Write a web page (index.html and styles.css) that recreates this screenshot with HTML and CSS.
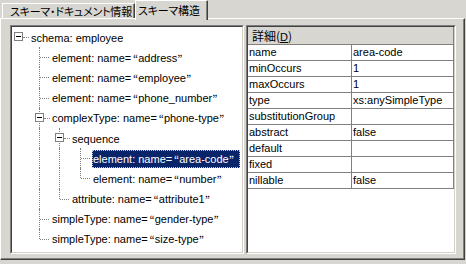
FILE: index.html
```html
<!DOCTYPE html>
<html lang="ja">
<head>
<meta charset="utf-8">
<title>スキーマ構造</title>
<link rel="stylesheet" href="styles.css">
</head>
<body>
<div class="dialog">
  <div class="tabs">
    <div class="tab tab-info">スキーマ・ドキュメント情報</div>
    <div class="tab tab-struct active">スキーマ構造</div>
  </div>
  <div class="page">
    <div class="pane tree">
      <div class="pane-in tree-in">
        <div class="node"><span class="c root"><i class="box"></i></span><span class="lbl">schema: employee</span></div>
        <div class="node"><span class="g"></span><span class="c tee"></span><span class="lbl">element: name=<span class="q qo">“</span>address<span class="q qc">”</span></span></div>
        <div class="node"><span class="g"></span><span class="c tee"></span><span class="lbl">element: name=<span class="q qo">“</span>employee<span class="q qc">”</span></span></div>
        <div class="node"><span class="g"></span><span class="c tee"></span><span class="lbl">element: name=<span class="q qo">“</span>phone_number<span class="q qc">”</span></span></div>
        <div class="node"><span class="g"></span><span class="c tee boxed"><i class="box"></i></span><span class="lbl">complexType: name=<span class="q qo">“</span>phone-type<span class="q qc">”</span></span></div>
        <div class="node"><span class="g"></span><span class="g pipe"></span><span class="c tee boxed"><i class="box"></i></span><span class="lbl">sequence</span></div>
        <div class="node"><span class="g"></span><span class="g pipe"></span><span class="g pipe"></span><span class="c tee"></span><span class="lbl sel">element: name=<span class="q qo">“</span>area-code<span class="q qc">”</span></span></div>
        <div class="node"><span class="g"></span><span class="g pipe"></span><span class="g pipe"></span><span class="c ell"></span><span class="lbl">element: name=<span class="q qo">“</span>number<span class="q qc">”</span></span></div>
        <div class="node"><span class="g"></span><span class="g pipe"></span><span class="c ell"></span><span class="lbl">attribute: name=<span class="q qo">“</span>attribute1<span class="q qc">”</span></span></div>
        <div class="node"><span class="g"></span><span class="c tee"></span><span class="lbl">simpleType: name=<span class="q qo">“</span>gender-type<span class="q qc">”</span></span></div>
        <div class="node"><span class="g"></span><span class="c ell"></span><span class="lbl">simpleType: name=<span class="q qo">“</span>size-type<span class="q qc">”</span></span></div>
      </div>
    </div>
    <div class="pane details">
      <div class="pane-in details-in">
        <div class="hdr">詳細(<u>D</u>)</div>
        <div class="grid">
          <div class="k">name</div><div class="v">area-code</div>
          <div class="k">minOccurs</div><div class="v">1</div>
          <div class="k">maxOccurs</div><div class="v">1</div>
          <div class="k">type</div><div class="v">xs:anySimpleType</div>
          <div class="k">substitutionGroup</div><div class="v"></div>
          <div class="k">abstract</div><div class="v">false</div>
          <div class="k">default</div><div class="v"></div>
          <div class="k">fixed</div><div class="v"></div>
          <div class="k">nillable</div><div class="v">false</div>
        </div>
      </div>
    </div>
  </div>
</div>
</body>
</html>
```

FILE: styles.css
```css
html, body {
  margin: 0;
  padding: 0;
}
body {
  width: 466px;
  height: 264px;
  overflow: hidden;
  background: #d8d6d0;
  color: #000;
  font-family: "Liberation Sans", "Noto Sans CJK JP", sans-serif;
  font-size: 11px;
}

/* ---------- tabs ---------- */
.tabs {
  display: flex;
  align-items: flex-end;
  height: 18px;
  padding-left: 2px;
}
.tab {
  box-sizing: border-box;
  height: 15px;
  border-top: 1px solid #fff;
  border-left: 1px solid #fff;
  border-right: 1px solid #404040;
  box-shadow: inset -1px 0 #808080;
  font-family: "Noto Sans CJK JP", sans-serif;
  font-feature-settings: "palt";
  font-size: 11px;
  letter-spacing: -0.2px;
  line-height: 14px;
  white-space: nowrap;
  overflow: hidden;
  background: #d8d6d0;
}
.tab-info {
  width: 133px;
  padding-left: 7px;
}
.tab-struct {
  width: 73px;
  padding-left: 2px;
}
.tab.active {
  height: 20px;
  line-height: 18px;
  margin-bottom: -2px;
  position: relative;
  z-index: 1;
}

/* ---------- page ---------- */
.page {
  box-sizing: border-box;
  width: 465px;
  height: 242px;
  border: 1px solid;
  border-color: #fff #404040 #404040 #fff;
  box-shadow: inset -1px -1px #808080;
  padding: 6px 8px 5px 9px;
  display: flex;
  gap: 2px;
}
.pane {
  box-sizing: border-box;
  height: 229px;
  border: 1px solid;
  border-color: #808080 #fff #fff #808080;
  background: #fff;
}
.pane-in {
  box-sizing: border-box;
  height: 100%;
  border: 1px solid;
  border-color: #404040 #d4d0c8 #d4d0c8 #404040;
}
.tree { width: 234px; }
.details { width: 210px; }

/* ---------- tree ---------- */
.node {
  display: flex;
  height: 20.2px;
  align-items: stretch;
  white-space: nowrap;
}
.g, .c {
  position: relative;
  flex: none;
}
.g { width: 21px; }
.g:nth-child(2) { width: 20px; }
.c { width: 18px; }

.pipe::before,
.tee::before,
.ell::before {
  content: "";
  position: absolute;
  left: 6px;
  top: 0;
  bottom: 0;
  border-left: 1px dotted #808080;
}
.ell::before { bottom: 50%; }

.c::after {
  content: "";
  position: absolute;
  left: 7px;
  width: 9px;
  top: 50%;
  border-top: 1px dotted #808080;
}
.root::after,
.boxed::after {
  left: 11px;
  width: 6px;
}

.box {
  position: absolute;
  left: 2px;
  top: 50%;
  margin-top: -5px;
  width: 9px;
  height: 9px;
  box-sizing: border-box;
  border: 1px solid #808080;
  background: #fff;
  z-index: 1;
}
.box::after {
  content: "";
  position: absolute;
  left: 1px;
  top: 3px;
  width: 5px;
  height: 1px;
  background: #000;
}

.lbl {
  display: flex;
  align-items: center;
  padding: 0 4px 0 1px;
  margin: 1px 0 0;
  height: 18px;
  align-self: center;
}
.q {
  display: inline-block;
  width: 7px;
  font-family: "Noto Sans CJK JP", sans-serif;
  font-size: 11px;
}
.qo { text-align: right; }
.qc { text-align: left; }
.sel {
  background: #0a246a;
  color: #fff;
  outline: 1px dotted #c8c8c8;
  outline-offset: -1px;
}

/* ---------- details ---------- */
.hdr {
  box-sizing: border-box;
  height: 18px;
  background: #d8d6d0;
  border-bottom: 1px solid #808080;
  border-right: 1px solid #808080;
  padding-left: 4px;
  font-family: "Noto Sans CJK JP", sans-serif;
  font-size: 12px;
  line-height: 17px;
}
.hdr u {
  font-family: "Liberation Sans", sans-serif;
  font-size: 11px;
}
.grid {
  display: grid;
  grid-template-columns: 104px 102px;
}
.k, .v {
  box-sizing: border-box;
  height: 16px;
  line-height: 15px;
  border-bottom: 1px solid #808080;
  border-right: 1px solid #808080;
  padding-left: 1px;
  white-space: nowrap;
  overflow: hidden;
}
```
